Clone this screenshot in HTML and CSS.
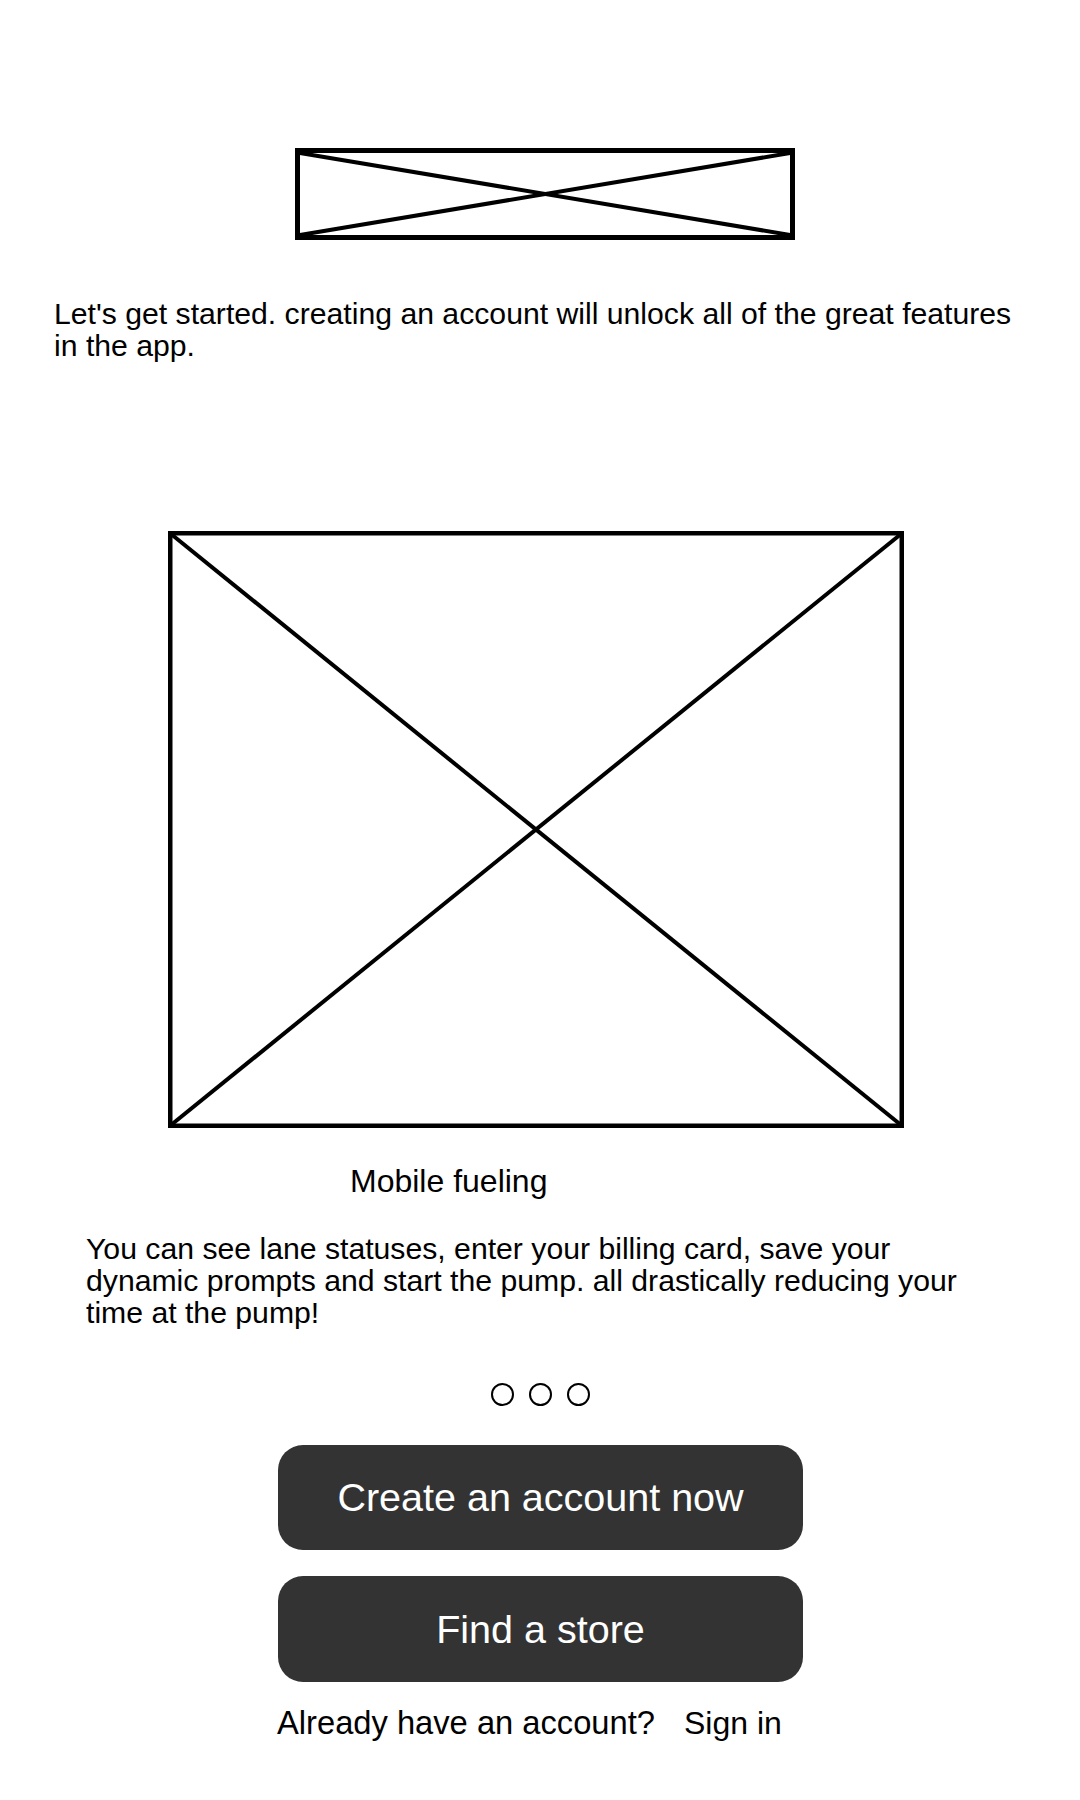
FILE: index.html
```html
<!DOCTYPE html>
<html lang="en">
<head>
<meta charset="utf-8">
<title>Get started</title>
<link rel="stylesheet" href="styles.css">
</head>
<body>
<main class="screen">
  <div class="logo">
    <svg width="500" height="92" viewBox="0 0 500 92" aria-label="Logo placeholder">
      <rect x="2.5" y="2.5" width="495" height="87" fill="#fff" stroke="#000" stroke-width="5"/>
      <line x1="5" y1="5" x2="495" y2="87" stroke="#000" stroke-width="4"/>
      <line x1="5" y1="87" x2="495" y2="5" stroke="#000" stroke-width="4"/>
    </svg>
  </div>

  <p class="intro">Let's get started. creating an account will unlock all of the great features in the app.</p>

  <div class="hero">
    <svg width="736" height="597" viewBox="0 0 736 597" aria-label="Image placeholder">
      <rect x="2.25" y="2.25" width="731.5" height="592.5" fill="#fff" stroke="#000" stroke-width="4.5"/>
      <line x1="3" y1="3" x2="733" y2="594" stroke="#000" stroke-width="4"/>
      <line x1="3" y1="594" x2="733" y2="3" stroke="#000" stroke-width="4"/>
    </svg>
  </div>

  <h2 class="title">Mobile fueling</h2>

  <p class="desc">You can see lane statuses, enter your billing card, save your dynamic prompts and start the pump. all drastically reducing your time at the pump!</p>

  <div class="dots">
    <span class="dot"></span>
    <span class="dot"></span>
    <span class="dot"></span>
  </div>

  <button class="btn btn-first" type="button">Create an account now</button>
  <button class="btn btn-second" type="button">Find a store</button>

  <div class="signin">
    <span class="signin-q">Already have an account?</span>
    <a class="signin-link" href="#">Sign in</a>
  </div>
</main>
</body>
</html>
```

FILE: styles.css
```css
html, body {
  margin: 0;
  padding: 0;
  background: #ffffff;
}

body {
  font-family: "Liberation Sans", Arial, sans-serif;
  color: #000;
}

.screen {
  width: 1080px;
  min-height: 1800px;
  display: flex;
  flex-direction: column;
  align-items: flex-start;
  padding-top: 148px;
  box-sizing: border-box;
}

.logo {
  margin-left: 295px;
  height: 92px;
  line-height: 0;
}

.logo svg, .hero svg {
  display: block;
}

.intro {
  margin: 58px 0 0 54px;
  width: 972px;
  font-size: 30.2px;
  line-height: 32px;
}

.hero {
  margin: 169px 0 0 168px;
  height: 597px;
  line-height: 0;
}

.title {
  margin: 35px 0 0 350px;
  font-size: 32px;
  line-height: 36px;
  font-weight: normal;
}

.desc {
  margin: 34px 0 0 86px;
  width: 885px;
  font-size: 30.2px;
  line-height: 32px;
}

.dots {
  align-self: stretch;
  margin-top: 54px;
  display: flex;
  justify-content: center;
  gap: 15px;
}

.dot {
  width: 23px;
  height: 23px;
  border: 2.7px solid #000;
  border-radius: 50%;
  box-sizing: border-box;
}

.btn {
  margin-left: 278px;
  width: 525px;
  border: none;
  border-radius: 25px;
  background: #333333;
  color: #ffffff;
  font-family: "Liberation Sans", Arial, sans-serif;
  font-size: 39.5px;
  padding: 0;
  cursor: pointer;
}

.btn-first {
  margin-top: 39px;
  height: 105px;
}

.btn-second {
  margin-top: 26px;
  height: 106px;
}

.signin {
  margin: 22px 0 0 277px;
  display: flex;
  align-items: baseline;
  gap: 29px;
  line-height: 37px;
}

.signin-q {
  font-size: 32.7px;
}

.signin-link {
  font-size: 32px;
  color: #000;
  text-decoration: none;
}
```
